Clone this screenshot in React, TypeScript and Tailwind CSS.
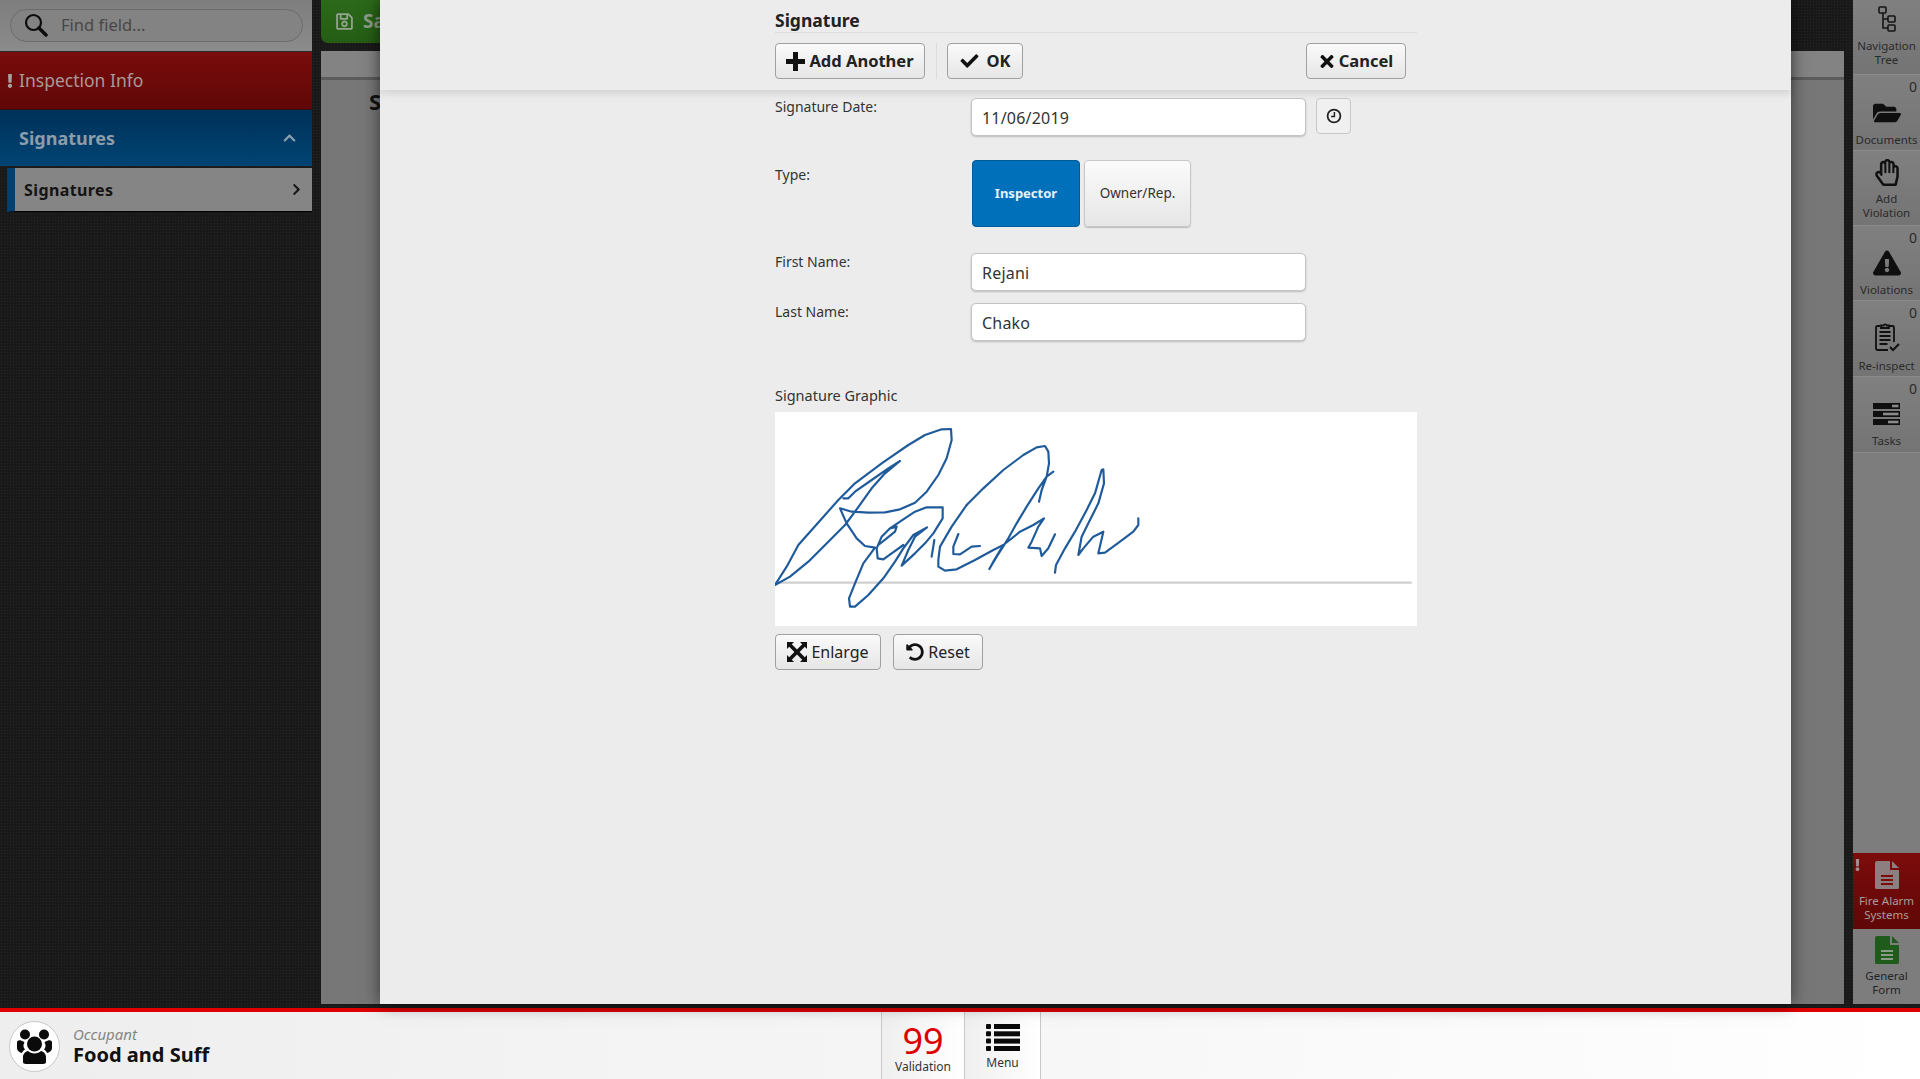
import React from "react";
import { FaCheck, FaTimes, FaUndoAlt, FaRegSave, FaChevronUp, FaChevronRight, FaFolderOpen, FaRegHandPaper, FaExclamationTriangle, FaExclamation } from "react-icons/fa";

const dark = "bg-[#191919] bg-[radial-gradient(#262626_0.7px,transparent_0.7px)] bg-[length:3px_3px]";

function Btn({ icon, label, w, bold }: { icon: React.ReactNode; label: string; w: string; bold?: boolean }) {
  return (
    <button className={`flex h-[36px] items-center justify-center gap-[4px] rounded-[4px] border border-[#a0a0a0] bg-gradient-to-b from-[#fafafa] to-[#e6e6e6] text-[#222] ${bold ? "text-[16.5px] font-bold" : "text-[16px]"} ${w}`}>
      {icon}
      <span>{label}</span>
    </button>
  );
}

function Field({ label, value, className }: { label: string; value: string; className: string }) {
  return (
    <div className={`flex ${className}`}>
      <div className="w-[196px] text-[14px] leading-[18px] text-[#333]">{label}</div>
      <div className="flex h-[38px] w-[335px] items-center rounded-[5px] border border-[#c4c4c4] bg-white pl-[10px] pt-[2px] text-[16px] tracking-[0.2px] text-[#333] shadow-[0_1px_2px_#bbb]">{value}</div>
    </div>
  );
}

function NavTree() {
  return (
    <svg width="18" height="26" viewBox="0 0 18 26" fill="none" stroke="#151515" strokeWidth="1.6">
      <rect x="1" y="1" width="7" height="6" rx="1" />
      <rect x="10" y="10" width="7" height="6" rx="1" />
      <rect x="10" y="19" width="7" height="6" rx="1" />
      <path d="M5 7v15h5M5 13h5" />
    </svg>
  );
}

function Reinspect() {
  return (
    <svg width="26" height="31" viewBox="0 0 26 31" fill="none" stroke="#111" strokeWidth="1.8" className="mb-[5px]">
      <path d="M14 29H3.5A1.5 1.5 0 0 1 2 27.5V6.5A1.5 1.5 0 0 1 3.5 5h3M15.5 5h3A1.5 1.5 0 0 1 20 6.5V21" />
      <path d="M7 7V4.5h2.5a1.8 1.8 0 0 1 3.4 0H15V7z" fill="#777" />
      <path d="M5.5 11h11M5.5 15h11M5.5 19h11M5.5 23h8" strokeWidth="1.8" />
      <path d="M16 26l3 3 6-6" strokeWidth="2" />
    </svg>
  );
}

function TasksIcon() {
  return (
    <svg width="27" height="22" viewBox="0 0 27 22">
      <rect y="0" width="27" height="6" fill="#0f0f0f" />
      <rect x="19" y="1.7" width="6.5" height="2.6" fill="#8a8a8a" />
      <rect y="8" width="27" height="6" fill="#0f0f0f" />
      <rect x="10" y="9.7" width="15.5" height="2.6" fill="#8a8a8a" />
      <rect y="16" width="27" height="6" fill="#0f0f0f" />
      <rect x="15" y="17.7" width="10.5" height="2.6" fill="#8a8a8a" />
    </svg>
  );
}

function DocIcon({ body, line }: { body: string; line: string }) {
  return (
    <svg width="24" height="28" viewBox="0 0 24 28">
      <path d="M2 0h13v9h9v17.5a1.5 1.5 0 0 1-1.5 1.5h-21A1.5 1.5 0 0 1 0 26.5V2A2 2 0 0 1 2 0z" fill={body} />
      <path d="M17 0l7 7h-7z" fill={body} />
      <path d="M6 14h12v2H6zM6 18h12v2H6zM6 22h12v2H6z" fill={line} />
    </svg>
  );
}

function UsersGlyph() {
  return (
    <svg width="37" height="35" viewBox="0 0 37 35" fill="#0a0a0a">
      <circle cx="9" cy="5.5" r="5" />
      <circle cx="28" cy="5.5" r="5" />
      <path d="M1 13.5C1 11.5 3 11 5 11.5c1.5.5 2.5 1 3.5 2-1.5 2-1.5 5 .5 7-1.500.8-2.500 2-3 3.500-2-.5-5-2-5-5z" />
      <path d="M36 13.500c0-2-2-2.500-4-2-1.500.5-2.500 1-3.500 2 1.500 2 1.500 5-.5 7 1.500.8 2.500 2 3 3.500 2-.5 5-2 5-5z" />
      <circle cx="18.500" cy="15" r="7.500" />
      <path d="M7 33v-5c0-3 2.500-5.500 5-6 1.500 1.500 4 2.500 6.500 2.500s5-1 6.500-2.500c2.500.5 5 3 5 6v5c0 1-1 2-3 2H10c-2 0-3-1-3-2z" />
    </svg>
  );
}

function Rail({ icon, label, count, h, pb }: { icon: React.ReactNode; label: React.ReactNode; count?: boolean; h: string; pb: string }) {
  return (
    <div className={`relative flex flex-col items-center justify-end border-b border-[#8a8a8a] bg-gradient-to-b from-[#808080] to-[#747474] ${pb} ${h}`}>
      {count && <span className="absolute right-[3px] top-[4px] text-[14px] leading-[16px] text-[#2b2b2b]">0</span>}
      <div className="mb-[5px] flex h-[30px] items-center justify-center">{icon}</div>
      <div className="text-center text-[11.5px] leading-[14px] text-[#2a2a2a]">{label}</div>
    </div>
  );
}

/* coordinates traced from the reference at 3x; first group is the left half, second the right half (shifted 525) */
const sigLeft =
  "M0 495L35 440L70 375L110 330L190 240L240 190L320 130L400 75L450 45L500 28L528 27L530 60L515 115L490 165L455 215L420 248L375 268L330 277L280 278L230 275L195 265L215 310L245 355L270 378L300 383L265 430L240 490L222 535L225 560L240 560L280 525L325 475L360 425L385 385L415 345L456 322L420 350L400 390L380 437L420 400L450 370L475 340L503 295L503 262L455 262L420 275L385 298L345 325L320 350L305 385L308 415L325 418L350 400L385 375 " +
  "M345 325L365 320L360 335L335 355L310 375 " +
  "M0 495L45 470L100 425L160 365L210 315L240 275L290 205L330 160L375 123L340 145L290 180L240 215L220 235L205 235 " +
  "M470 410L478 360 " +
  "M550 342L535 380L535 402L555 403L590 380L615 378 " +
  "M490 440L490 420L495 380L530 320L575 255 " +
  "M490 420L490 440L510 452L545 448L600 420L655 390L685 375";
const sigRight =
  "M50 255L100 205L160 150L220 105L260 82L285 78L295 95L297 130L290 170L265 205L230 260L200 310L175 355L140 410L118 447L130 425L160 375L210 335L250 315L282 295L265 320L245 365L235 383L270 385L275 408L295 385L315 343 " +
  "M310 155L290 170L275 210L267 245 " +
  "M315 458L318 435L345 385L375 335L410 270L435 220L455 150L460 148L462 190L445 250L415 310L395 350L385 405L400 385L430 350L460 335L445 400L465 398L510 365L550 335L565 315L565 295";

export default function App() {
  return (
    <div className={`flex h-[1079px] w-[1920px] flex-col overflow-hidden font-['Noto_Sans',sans-serif] ${dark}`}>
      <div className="relative flex h-[1008px] shrink-0">
        {/* left sidebar */}
        <aside className="w-[312px] shrink-0">
          <div className="flex h-[52px] items-center border-b border-[#2a2a2a] bg-gradient-to-b from-[#7e7e7e] to-[#8b8b8b] pb-[1px] pl-[10px]">
            <div className="flex h-[33px] w-[293px] items-center rounded-full border border-[#6c6c6c] bg-[#838383] pl-[13px] text-[16.5px] text-[#474747]">
              <svg width="24" height="24" viewBox="0 0 24 24" fill="none" stroke="#0c0c0c" className="mr-[13px]">
                <circle cx="9.500" cy="9.500" r="7.500" strokeWidth="2.200" />
                <path d="M15 15l7 7" strokeWidth="3.500" strokeLinecap="round" />
              </svg>
              Find field...
            </div>
          </div>
          <div className="relative flex h-[58px] items-center border-b border-[#2a1010] bg-gradient-to-b from-[#7a0c0c] to-[#600707] pl-[19px] text-[17.5px] text-[#a99a9a]">
            <FaExclamation className="absolute left-[6px] top-[22px] h-[14px] w-[8px] text-[#a9a0a0]" />
            Inspection Info
          </div>
          <div className="flex h-[56px] items-center justify-between bg-gradient-to-b from-[#00315a] to-[#004473] pl-[19px] pr-[15px] text-[18px] font-bold text-[#8b9dab]">
            Signatures
            <FaChevronUp className="h-[14px] w-[15px] text-[#8f9fac]" />
          </div>
          <div className="ml-[7px] mt-[2px] flex h-[44px] items-center justify-between border-b border-black border-l-[8px] border-l-[#00406e] bg-[#858585] pl-[9px] pr-[11px] text-[16px] font-bold tracking-[0.4px] text-[#141414]">
            Signatures
            <FaChevronRight className="h-[13px] w-[9px] text-[#141414]" />
          </div>
        </aside>

        {/* main content under the modal */}
        <main className="ml-[9px] flex h-[1004px] w-[1523px] shrink-0 flex-col">
          <div className="flex h-[43px] w-[70px] items-center rounded-bl-[7px] bg-gradient-to-b from-[#2c6a1a] to-[#245c14] pl-[14px] text-[19px] font-bold text-[#8d9d88]">
            <FaRegSave className="mr-[9px] h-[19px] w-[19px] text-[#94a48f]" />
            Sa
          </div>
          <div className="mt-[8px] h-[29px] border-b-[3px] border-[#5c5c5c] bg-[#838383]" />
          <div className="flex-1 bg-[#777777] pl-[48px] pt-[8px]">
            <div className="text-[22px] font-bold leading-[26px] text-[#111]">S</div>
          </div>
        </main>

        {/* right rail */}
        <aside className="ml-[9px] flex h-[1004px] w-[67px] shrink-0 flex-col bg-[#7d7d7d]">
          <Rail h="h-[75px]" pb="pb-[7px]" icon={<NavTree />} label={<>Navigation<br />Tree</>} />
          <Rail h="h-[76px]" pb="pb-[3px]" count icon={<FaFolderOpen className="h-[28px] w-[28px] text-[#0f0f0f]" />} label="Documents" />
          <Rail h="h-[75px]" pb="pb-[5px]" icon={<FaRegHandPaper className="h-[27px] w-[26px] text-[#111]" />} label={<>Add<br />Violation</>} />
          <Rail h="h-[75px]" pb="pb-[3px]" count icon={<FaExclamationTriangle className="h-[26px] w-[28px] text-[#0f0f0f]" />} label="Violations" />
          <Rail h="h-[76px]" pb="pb-[3px]" count icon={<Reinspect />} label="Re-inspect" />
          <Rail h="h-[76px]" pb="pb-[4px]" count icon={<TasksIcon />} label="Tasks" />
          <div className="flex-1" />
          <div className="relative flex h-[76px] flex-col items-center justify-end bg-gradient-to-b from-[#7c0c0c] to-[#600707] pb-[7px] text-center text-[11.5px] leading-[14px] text-[#a89c9c]">
            <FaExclamation className="absolute left-[1px] top-[6px] h-[12px] w-[7px] text-[#a09090]" />
            <div className="mb-[5px]"><DocIcon body="#8d7f7f" line="#7a0c0c" /></div>
            <div>Fire Alarm<br />Systems</div>
          </div>
          <div className="flex h-[75px] flex-col items-center justify-end bg-[#7d7d7d] pb-[7px] text-center text-[11.5px] leading-[14px] text-[#242424]">
            <div className="mb-[5px]"><DocIcon body="#1f5c1b" line="#8a9c88" /></div>
            <div>General<br />Form</div>
          </div>
        </aside>

        {/* modal */}
        <div className="absolute left-[380px] top-0 h-[1004px] w-[1411px] bg-[#ececec] shadow-[0_0_16px_rgba(0,0,0,0.55)]">
          <div className="h-[90px] pl-[395px] shadow-[0_3px_8px_rgba(0,0,0,0.12)]">
            <div className="w-[642px]">
              <div className="h-[33px] border-b border-[#dcdcdc] pt-[8px] text-[17.5px] font-bold leading-[24px] text-[#222]">Signature</div>
              <div className="mt-[10px] flex items-center">
                <Btn bold w="w-[150px]" icon={
                  <svg width="19" height="19" viewBox="0 0 19 19" fill="#111"><path d="M7 0h5v7h7v5h-7v7H7v-7H0V7h7z" /></svg>
                } label="Add Another" />
                <div className="ml-[11px] mr-[10px] h-[36px] w-px bg-[#dcdcdc]" />
                <Btn bold w="w-[76px]" icon={<FaCheck className="mr-[2px] h-[18px] w-[21px] text-[#111]" />} label="OK" />
                <div className="flex-1" />
                <Btn bold w="w-[100px] mr-[11px]" icon={<FaTimes className="h-[19px] w-[16px] text-[#111]" />} label="Cancel" />
              </div>
            </div>
          </div>

          <div className="w-[1037px] pl-[395px] pt-[8px]">
            <div className="flex">
              <Field className="" label="Signature Date:" value="11/06/2019" />
              <button className="ml-[10px] flex h-[36px] w-[35px] items-center justify-center rounded-[4px] border border-[#c8c8c8] bg-[#f0f0f0]">
                <svg width="16" height="16" viewBox="0 0 16 16" fill="none" stroke="#222" strokeWidth="1.8">
                  <circle cx="8" cy="8" r="6.400" />
                  <path d="M8.400 4v4.400H5" strokeWidth="1.500" />
                </svg>
              </button>
            </div>

            <div className="mt-[24px] flex">
              <div className="w-[197px] pt-[6px] text-[14px] leading-[18px] text-[#333]">Type:</div>
              <button className="h-[67px] w-[108px] rounded-[4px] border border-[#005a96] bg-[#0070ba] text-[13px] font-bold text-[#e8f2fa]">Inspector</button>
              <button className="ml-[4px] h-[67px] w-[107px] rounded-[4px] border border-[#c8c8c8] bg-gradient-to-b from-[#fbfbfb] to-[#e6e6e6] text-[13.5px] text-[#333] shadow-[0_1px_1px_#bbb]">Owner/Rep.</button>
            </div>

            <Field className="mt-[26px]" label="First Name:" value="Rejani" />
            <Field className="mt-[12px]" label="Last Name:" value="Chako" />

            <div className="mt-[45px] text-[14.5px] leading-[18px] text-[#333]">Signature Graphic</div>
            <div className="mt-[8px] h-[214px] w-[642px] bg-white">
              <svg viewBox="0 -24 1926 642" className="block h-[214px] w-[642px]">
                <path d="M0 488H1910" stroke="#cfcfcf" strokeWidth="7" fill="none" />
                <g fill="none" stroke="#1f5b9a" strokeWidth="6.5" strokeLinejoin="round" strokeLinecap="round">
                  <path d={sigLeft} />
                  <path d={sigRight} transform="translate(525 0)" />
                </g>
              </svg>
            </div>
            <div className="mt-[8px] flex gap-[12px]">
              <Btn w="w-[106px]" icon={
                <svg width="20" height="20" viewBox="0 0 20 20" fill="#111">
                  <path d="M0 0h7L4.800 2.200 10 7.400 15.200 2.200 13 0h7v7l-2.200-2.200L12.600 10l5.200 5.200L20 13v7h-7l2.200-2.200L10 12.600l-5.200 5.200L7 20H0v-7l2.200 2.200L7.400 10 2.200 4.800 0 7z" />
                </svg>
              } label="Enlarge" />
              <Btn w="w-[90px]" icon={<FaUndoAlt className="h-[18px] w-[18px] text-[#111]" />} label="Reset" />
            </div>
          </div>
        </div>
      </div>

      {/* bottom bar */}
      <div className="h-[4px] shrink-0 bg-[#e00000]" />
      <footer className="flex h-[67px] shrink-0 bg-gradient-to-r from-[#eeeeee] via-[#f6f6f6] to-white">
        <div className="ml-[9px] mt-[9px] flex h-[51px] w-[51px] shrink-0 items-center justify-center rounded-full border border-[#c8c8c8] bg-white">
          <UsersGlyph />
        </div>
        <div className="ml-[13px] w-[808px] shrink-0 pt-[13px]">
          <div className="text-[15px] italic leading-[18px] text-[#858585]">Occupant</div>
          <div className="text-[20px] font-bold leading-[24px] text-[#111]">Food and Suff</div>
        </div>
        <div className="flex h-[67px] w-[84px] shrink-0 flex-col items-center border-x border-[#c9c9c9] bg-gradient-to-r from-[#efefef] to-white">
          <div className="mt-[13px] text-[36px] leading-[32px] text-[#dd0000]">99</div>
          <div className="mt-[3px] text-[12px] leading-[14px] text-[#333]">Validation</div>
        </div>
        <div className="flex h-[67px] w-[76px] shrink-0 flex-col items-center border-r border-[#c9c9c9] bg-gradient-to-r from-[#efefef] to-white">
          <svg width="34" height="27" viewBox="0 0 34 27" className="mt-[12px]" fill="#0a0a0a">
            <rect x="0" y="0" width="5" height="5" rx="1" /><rect x="8" y="0" width="26" height="5" />
            <rect x="0" y="7.300" width="5" height="5" rx="1" /><rect x="8" y="7.300" width="26" height="5" />
            <rect x="0" y="14.600" width="5" height="5" rx="1" /><rect x="8" y="14.600" width="26" height="5" />
            <rect x="0" y="22" width="5" height="5" rx="1" /><rect x="8" y="22" width="26" height="5" />
          </svg>
          <div className="mt-[5px] text-[12px] leading-[14px] text-[#333]">Menu</div>
        </div>
      </footer>
    </div>
  );
}
